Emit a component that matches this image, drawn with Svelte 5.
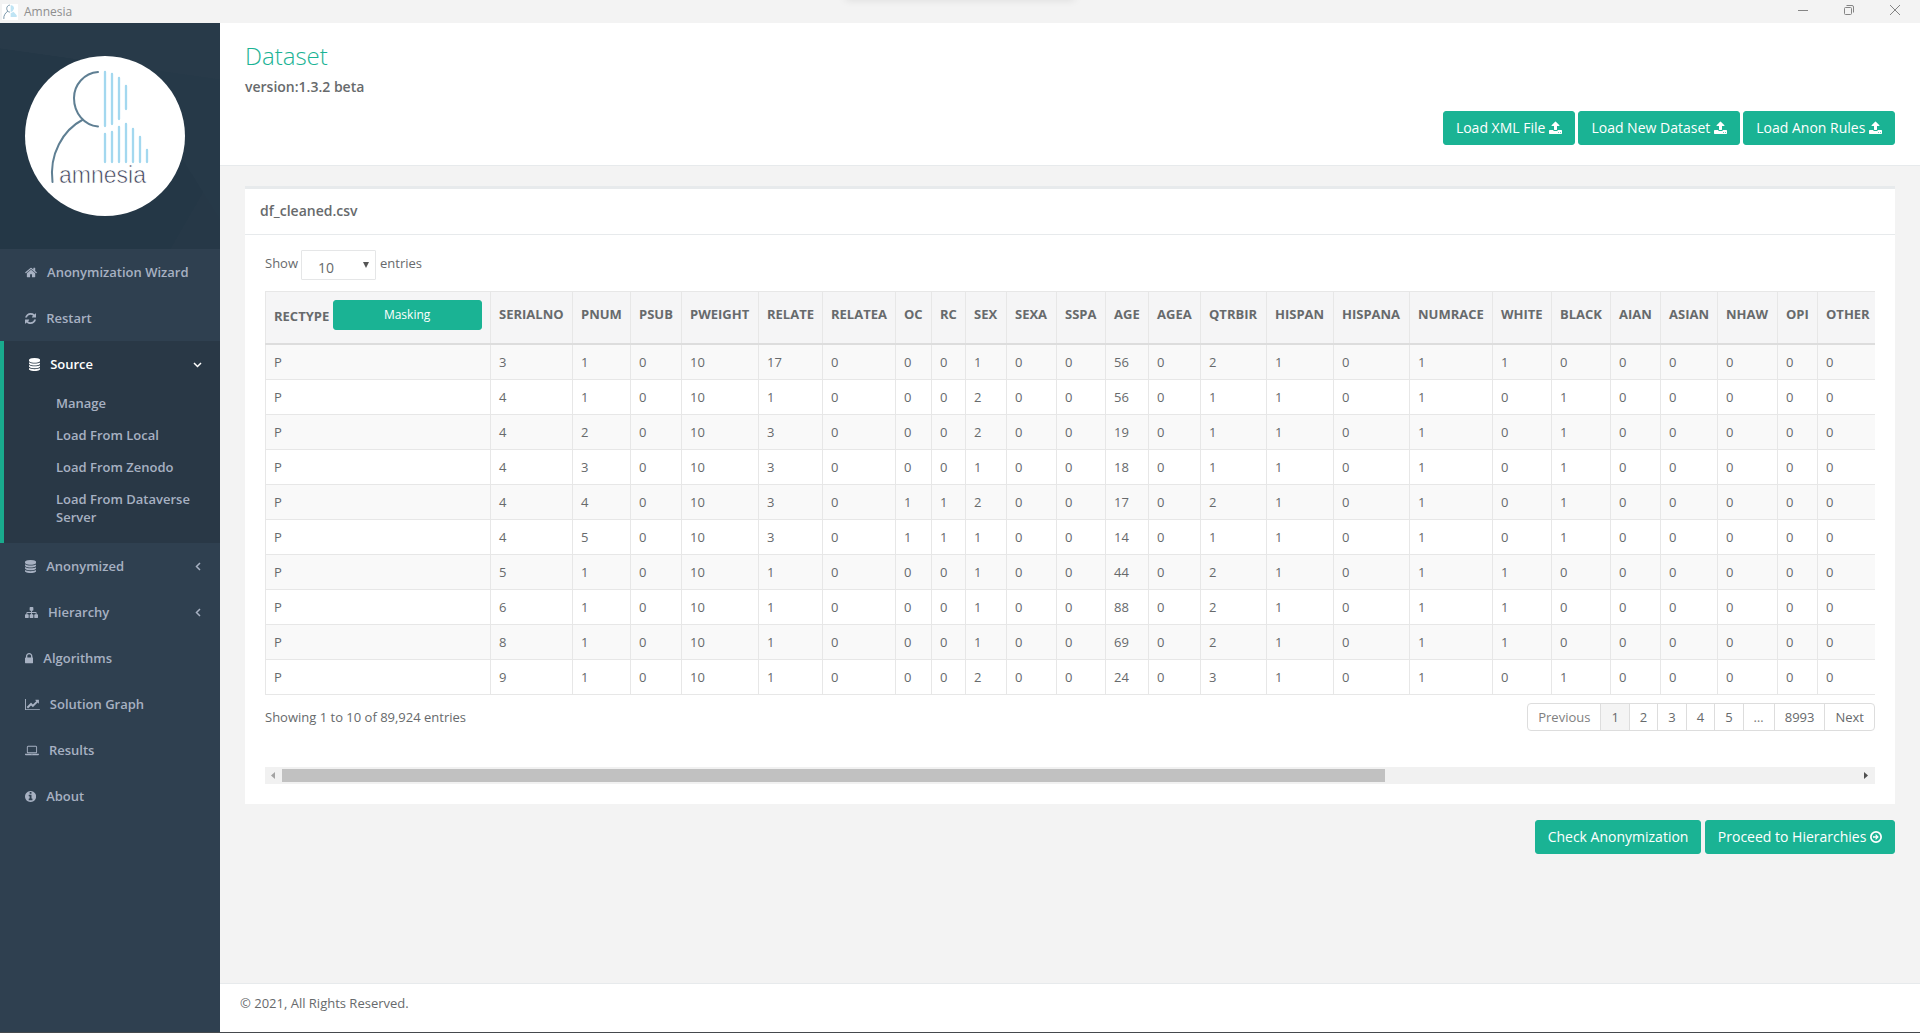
<script>
  const icons = {
    home: ['64 0 1664 1792', 'M1472 992v480q0 26-19 45t-45 19h-384v-384h-256v384h-384q-26 0-45-19t-19-45v-480q0-1 .5-3t.5-3l575-474 575 474q1 2 1 6zm223-69l-62 74q-8 9-21 11h-3q-13 0-21-7l-692-577-692 577q-12 8-24 7-13-2-21-11l-62-74q-8-10-7-23.5t11-21.5l719-599q32-26 76-26t76 26l244 204v-195q0-14 9-23t23-9h192q14 0 23 9t9 23v408l219 182q10 8 11 21.5t-7 23.5z'],
    refresh: ['128 0 1536 1792', 'M1639 1056q0 5-1 7-64 268-268 434.5t-478 166.5q-146 0-282.5-55t-243.5-157l-129 129q-19 19-45 19t-45-19-19-45v-448q0-26 19-45t45-19h448q26 0 45 19t19 45-19 45l-137 137q71 66 161 102t187 36q134 0 250-65t186-179q11-17 53-117 8-23 30-23h192q13 0 22.5 9.5t9.5 22.5zm25-800v448q0 26-19 45t-45 19h-448q-26 0-45-19t-19-45 19-45l138-138q-148-137-349-137-134 0-250 65t-186 179q-11 17-53 117-8 23-30 23h-199q-13 0-22.5-9.5t-9.5-22.5v-7q65-268 270-434.5t480-166.5q146 0 284 55.5t245 156.5l130-129q19-19 45-19t45 19 19 45z'],
    database: ['128 0 1536 1792', 'M896 768q237 0 443-43t325-127v170q0 69-103 128t-280 93.5-385 34.5-385-34.5-280-93.5-103-128v-170q119 84 325 127t443 43zm0 768q237 0 443-43t325-127v170q0 69-103 128t-280 93.5-385 34.5-385-34.5-280-93.5-103-128v-170q119 84 325 127t443 43zm0-384q237 0 443-43t325-127v170q0 69-103 128t-280 93.5-385 34.5-385-34.5-280-93.5-103-128v-170q119 84 325 127t443 43zm0-1152q208 0 385 34.5t280 93.5 103 128v128q0 69-103 128t-280 93.5-385 34.5-385-34.5-280-93.5-103-128v-128q0-69 103-128t280-93.5 385-34.5z'],
    sitemap: ['0 0 1792 1792', 'M1792 1248v320q0 40-28 68t-68 28h-320q-40 0-68-28t-28-68v-320q0-40 28-68t68-28h96v-192h-512v192h96q40 0 68 28t28 68v320q0 40-28 68t-68 28h-320q-40 0-68-28t-28-68v-320q0-40 28-68t68-28h96v-192h-512v192h96q40 0 68 28t28 68v320q0 40-28 68t-68 28h-320q-40 0-68-28t-28-68v-320q0-40 28-68t68-28h96v-192q0-52 38-90t90-38h512v-192h-96q-40 0-68-28t-28-68v-320q0-40 28-68t68-28h320q40 0 68 28t28 68v320q0 40-28 68t-68 28h-96v192h512q52 0 90 38t38 90v192h96q40 0 68 28t28 68z'],
    lock: ['320 0 1152 1792', 'M640 768h512v-192q0-106-75-181t-181-75-181 75-75 181v192zm832 96v576q0 40-28 68t-68 28h-960q-40 0-68-28t-28-68v-576q0-40 28-68t68-28h32v-192q0-184 132-316t316-132 316 132 132 316v192h32q40 0 68 28t28 68z'],
    chart: ['0 0 2048 1792', 'M2048 1536v128h-2048v-1536h128v1408h1920zm-128-1248v435q0 21-19.5 29.5t-35.5-7.5l-121-121-633 633q-10 10-23 10t-23-10l-233-233-416 416-192-192 585-585q10-10 23-10t23 10l233 233 464-464-121-121q-16-16-7.5-35.5t29.5-19.5h435q14 0 23 9t9 23z'],
    laptop: ['0 0 1920 1792', 'M416 1280q-66 0-113-47t-47-113v-704q0-66 47-113t113-47h1088q66 0 113 47t47 113v704q0 66-47 113t-113 47h-1088zm-32-864v704q0 13 9.5 22.5t22.5 9.5h1088q13 0 22.5-9.5t9.5-22.5v-704q0-13-9.5-22.5t-22.5-9.5h-1088q-13 0-22.5 9.5t-9.5 22.5zm1376 928h160v96q0 40-47 68t-113 28h-1600q-66 0-113-28t-47-68v-96h1760zm-720 96q16 0 16-16t-16-16h-160q-16 0-16 16t16 16h160z'],
    info: ['128 0 1536 1792', 'M1152 1376v-160q0-14-9-23t-23-9h-96v-512q0-14-9-23t-23-9h-320q-14 0-23 9t-9 23v160q0 14 9 23t23 9h96v320h-96q-14 0-23 9t-9 23v160q0 14 9 23t23 9h448q14 0 23-9t9-23zm-128-896v-160q0-14-9-23t-23-9h-192q-14 0-23 9t-9 23v160q0 14 9 23t23 9h192q14 0 23-9t9-23zm640 416q0 209-103 385.5t-279.5 279.5-385.5 103-385.5-103-279.5-279.5-103-385.5 103-385.5 279.5-279.5 385.5-103 385.5 103 279.5 279.5 103 385.5z'],
    upload: ['64 0 1664 1792', 'M1344 1472q0-26-19-45t-45-19-45 19-19 45 19 45 45 19 45-19 19-45zm256 0q0-26-19-45t-45-19-45 19-19 45 19 45 45 19 45-19 19-45zm128-224v320q0 40-28 68t-68 28h-1472q-40 0-68-28t-28-68v-320q0-40 28-68t68-28h427q21 56 70.5 92t110.5 36h256q61 0 110.5-36t70.5-92h427q40 0 68 28t28 68zm-325-648q-17 40-59 40h-256v448q0 26-19 45t-45 19h-256q-26 0-45-19t-19-45v-448h-256q-42 0-59-40-17-39 14-69l448-448q18-19 45-19t45 19l448 448q31 30 14 69z'],
    proceed: ['128 0 1536 1792', 'M896 128a768 768 0 1 0 0 1536a768 768 0 1 0 0-1536zM896 352a544 544 0 1 1 0 1088a544 544 0 1 1 0-1088zM896 544l-104 104 152 152h-432v192h432l-152 152 104 104 352-352z']
  };

  const menuTop = [
    { icon: 'home', label: 'Anonymization Wizard' },
    { icon: 'refresh', label: 'Restart' }
  ];
  const sources = ['Manage', 'Load From Local', 'Load From Zenodo', 'Load From Dataverse Server'];
  const menuBottom = [
    { icon: 'database', label: 'Anonymized', sub: true },
    { icon: 'sitemap', label: 'Hierarchy', sub: true },
    { icon: 'lock', label: 'Algorithms' },
    { icon: 'chart', label: 'Solution Graph' },
    { icon: 'laptop', label: 'Results' },
    { icon: 'info', label: 'About' }
  ];
  const loaders = ['Load XML File', 'Load New Dataset', 'Load Anon Rules'];

  const columns = [
    ['RECTYPE', 225], ['SERIALNO', 82], ['PNUM', 58], ['PSUB', 51], ['PWEIGHT', 77],
    ['RELATE', 64], ['RELATEA', 73], ['OC', 36], ['RC', 34], ['SEX', 41], ['SEXA', 50],
    ['SSPA', 49], ['AGE', 43], ['AGEA', 52], ['QTRBIR', 66], ['HISPAN', 67], ['HISPANA', 76],
    ['NUMRACE', 83], ['WHITE', 59], ['BLACK', 59], ['AIAN', 50], ['ASIAN', 57], ['NHAW', 60],
    ['OPI', 40], ['OTHER', 62]
  ];
  const tableWidth = columns.reduce((sum, c) => sum + c[1], 0);
  const rows = [
    'P 3 1 0 10 17 0 0 0 1 0 0 56 0 2 1 0 1 1 0 0 0 0 0 0',
    'P 4 1 0 10 1 0 0 0 2 0 0 56 0 1 1 0 1 0 1 0 0 0 0 0',
    'P 4 2 0 10 3 0 0 0 2 0 0 19 0 1 1 0 1 0 1 0 0 0 0 0',
    'P 4 3 0 10 3 0 0 0 1 0 0 18 0 1 1 0 1 0 1 0 0 0 0 0',
    'P 4 4 0 10 3 0 1 1 2 0 0 17 0 2 1 0 1 0 1 0 0 0 0 0',
    'P 4 5 0 10 3 0 1 1 1 0 0 14 0 1 1 0 1 0 1 0 0 0 0 0',
    'P 5 1 0 10 1 0 0 0 1 0 0 44 0 2 1 0 1 1 0 0 0 0 0 0',
    'P 6 1 0 10 1 0 0 0 1 0 0 88 0 2 1 0 1 1 0 0 0 0 0 0',
    'P 8 1 0 10 1 0 0 0 1 0 0 69 0 2 1 0 1 1 0 0 0 0 0 0',
    'P 9 1 0 10 1 0 0 0 2 0 0 24 0 3 1 0 1 0 1 0 0 0 0 0'
  ].map((r) => r.split(' '));
  const pages = ['Previous', '1', '2', '3', '4', '5', '…', '8993', 'Next'];

  const upperBars = [[105, 72, 126], [112, 74, 124], [119, 78, 119], [126, 86, 109]];
  const lowerBars = [[105, 134, 162], [112, 132, 162], [119, 127, 162], [126, 124, 162], [133, 129, 162], [140, 137, 162], [147, 150, 162]];
</script>

{#snippet icon(name)}
  <svg class="fa" viewBox={icons[name][0]} aria-hidden="true"><path fill-rule="evenodd" d={icons[name][1]} /></svg>
{/snippet}

{#snippet person()}
  <g fill="none" stroke-linecap="round" stroke-width="2.3">
    <path stroke="#5f7f93" stroke-width="2" d="M98 72C84 73 74 85 74 98C74 113 84 125 98 126.500M83 119.500C63 130 49 154 52.500 182" />
    {#each [...upperBars, ...lowerBars] as [x, a, b]}
      <path stroke="#a3d8ef" d="M{x} {a}V{b}" />
    {/each}
  </g>
{/snippet}

<div class="window">
  <header class="titlebar">
    <svg class="appicon" viewBox="38 64 122 122" aria-hidden="true">
      <g fill="none" stroke="#6f8fa3" stroke-width="7"><path d="M98 72C84 73 74 85 74 98C74 113 84 125 98 126M83 119C63 130 49 154 52 178" /></g>
      <path fill="#bfe4f4" d="M104 72Q128 76 130 98Q126 118 104 126zM104 134L126 124L150 150V164H104z" />
    </svg>
    <span class="apptitle">Amnesia</span>
    <div class="snapbar"></div>
    <div class="controls">
      <button aria-label="Minimize"><svg viewBox="0 0 12 12"><path d="M1 6.500H11" /></svg></button>
      <button aria-label="Restore"><svg viewBox="0 0 12 12"><rect x="1.500" y="3.500" width="7" height="7" rx="1" /><path d="M3.500 1.500H9Q10.500 1.500 10.500 3V8.500" /></svg></button>
      <button aria-label="Close"><svg viewBox="0 0 12 12"><path d="M1 1L11 11M11 1L1 11" /></svg></button>
    </div>
  </header>

  <div class="app">
    <nav class="sidebar">
      <div class="brand">
        <svg class="logo" viewBox="25 56 160 160" role="img" aria-label="amnesia">
          <circle cx="105" cy="136" r="80" fill="#fff" />
          {@render person()}
          <text x="59" y="183" class="word">amnesia</text>
        </svg>
      </div>
      <ul class="menu">
        {#each menuTop as m}
          <li><a href="#{m.icon}">{@render icon(m.icon)}{m.label}</a></li>
        {/each}
        <li class="active">
          <a href="#source">{@render icon('database')}Source
            <svg class="angle" viewBox="0 0 9 9"><path d="M1 3L4.500 6.500L8 3" /></svg></a>
          <ul class="sub">
            {#each sources as s}
              <li><a href="#source">{s}</a></li>
            {/each}
          </ul>
        </li>
        {#each menuBottom as m}
          <li>
            <a href="#{m.icon}">{@render icon(m.icon)}{m.label}
              {#if m.sub}<svg class="angle" viewBox="0 0 9 9"><path d="M7 1L3.500 4.500L7 8" /></svg>{/if}</a>
          </li>
        {/each}
      </ul>
    </nav>

    <div class="page">
      <section class="heading">
        <h2>Dataset</h2>
        <p class="version">version:1.3.2 beta</p>
        <div class="actions">
          {#each loaders as l}
            <button class="btn">{l} {@render icon('upload')}</button>{' '}
          {/each}
        </div>
      </section>

      <main>
        <section class="panel">
          <h5>df_cleaned.csv</h5>
          <div class="content">
            <div class="length">
              <label for="len">Show</label>
              <span class="pick">
                <select id="len"><option>10</option><option>25</option><option>50</option></select>
              </span>
              <span>entries</span>
            </div>

            <div class="scroller">
              <table style="width: {tableWidth}px">
                <colgroup>
                  {#each columns as c}<col style="width: {c[1]}px" />{/each}
                </colgroup>
                <thead>
                  <tr>
                    {#each columns as c, i}
                      {#if i === 0}
                        <th class="first">{c[0]} <button class="btn mask">Masking</button></th>
                      {:else}
                        <th>{c[0]}</th>
                      {/if}
                    {/each}
                  </tr>
                </thead>
                <tbody>
                  {#each rows as row}
                    <tr>{#each row as cell}<td>{cell}</td>{/each}</tr>
                  {/each}
                </tbody>
              </table>
            </div>

            <div class="tablefoot">
              <span>Showing 1 to 10 of 89,924 entries</span>
              <div class="pager">
                {#each pages as p}
                  <a href="#page" class:current={p === '1'} class:off={p === 'Previous' || p === '…'}>{p}</a>
                {/each}
              </div>
            </div>

            <div class="hbar">
              <button aria-label="Scroll left"><svg class="dim" viewBox="0 0 17 17"><path d="M10 5V12L6 8.500z" /></svg></button>
              <div class="track"><div class="thumb"></div></div>
              <button aria-label="Scroll right"><svg viewBox="0 0 17 17"><path d="M6 5V12L10 8.500z" /></svg></button>
            </div>
          </div>
        </section>
        <div class="actions">
          <button class="btn">Check Anonymization</button>
          <button class="btn">Proceed to Hierarchies {@render icon('proceed')}</button>
        </div>
      </main>

      <footer>© 2021, All Rights Reserved.</footer>
    </div>
  </div>
</div>

<style>
  :global(body) {
    margin: 0;
    background: #f3f3f3;
  }
  .window {
    box-sizing: border-box;
    min-height: 100vh;
    display: flex;
    flex-direction: column;
    border-bottom: 1px solid #45494d;
    font-family: 'Open Sans', 'Noto Sans', sans-serif;
    font-size: 13px;
    line-height: 18px;
    color: #676a6c;
  }
  button, select {
    font-family: inherit;
    margin: 0;
  }
  a {
    color: inherit;
    text-decoration: none;
  }
  ul {
    list-style: none;
    margin: 0;
    padding: 0;
  }

  .titlebar {
    position: relative;
    display: flex;
    align-items: center;
    height: 23px;
    background: #f3f3f3;
    padding: 0 2px;
    overflow: hidden;
  }
  .appicon {
    width: 16px;
    height: 16px;
    background: #fff;
  }
  .apptitle {
    margin-left: 6px;
    font-size: 12px;
    color: #8e8e8e;
  }
  .snapbar {
    position: absolute;
    top: -6px;
    left: 44%;
    width: 12%;
    height: 5px;
    border-radius: 4px;
    box-shadow: 0 0 8px rgba(0, 0, 0, 0.15);
  }
  .controls {
    margin-left: auto;
    align-self: flex-start;
    display: flex;
  }
  .controls button {
    width: 46px;
    height: 20px;
    padding: 0;
    border: 0;
    background: none;
    display: grid;
    place-items: center;
  }
  .controls svg {
    width: 12px;
    height: 12px;
    fill: none;
    stroke: #858585;
  }

  .app {
    flex: 1;
    display: flex;
  }
  .sidebar {
    flex: none;
    width: 220px;
    background: #2f4050;
    color: #a7b1c2;
    font-weight: 600;
  }
  .brand {
    padding: 33px 25px;
    background:
      linear-gradient(8deg, transparent 78%, #283a49 78.2%),
      linear-gradient(58deg, transparent 66%, #263948 66.2%),
      linear-gradient(-60deg, #263847 0 14%, transparent 14.2%),
      #243746;
  }
  .logo {
    display: block;
    width: 160px;
    height: 160px;
  }
  .word {
    font-family: 'Liberation Sans', sans-serif;
    font-weight: 400;
    font-size: 23px;
    fill: #3d4259;
    stroke: #fff;
    stroke-width: 0.6;
  }
  .fa {
    height: 1em;
    fill: currentColor;
    vertical-align: -2px;
  }
  .menu > li > a {
    display: flex;
    align-items: center;
    padding: 14px 18px 14px 25px;
  }
  .menu .fa {
    margin-right: 10px;
  }
  .active {
    background: #293846;
    border-left: 4px solid #19aa8d;
  }
  .active > a {
    color: #fff;
  }
  .angle {
    margin-left: auto;
    width: 9px;
    height: 9px;
    fill: none;
    stroke: currentColor;
    stroke-width: 1.5;
  }
  .sub {
    padding-bottom: 10px;
  }
  .sub a {
    display: block;
    padding: 7px 10px 7px 52px;
  }

  .page {
    flex: 1;
    min-width: 0;
    display: flex;
    flex-direction: column;
  }
  .heading {
    background: #fff;
    border-bottom: 1px solid #e7eaec;
    padding: 20px 25px;
  }
  h2 {
    margin: 0 0 8px;
    font-size: 24px;
    line-height: 26px;
    font-weight: 300;
    color: #1ab394;
  }
  .version {
    margin: 0 0 14px;
    font-size: 14px;
    line-height: 20px;
    font-weight: 600;
  }
  .actions {
    text-align: right;
    line-height: 0;
  }
  .btn {
    box-sizing: border-box;
    height: 34px;
    padding: 6px 12px;
    border: 1px solid #1ab394;
    border-radius: 3px;
    background: #1ab394;
    color: #fff;
    font-size: 14px;
    line-height: 20px;
    vertical-align: middle;
  }

  main {
    flex: 1;
    padding: 20px 25px;
  }
  .panel {
    background: #fff;
    border-top: 3px solid #e7eaec;
    margin-bottom: 16px;
  }
  h5 {
    margin: 0;
    padding: 12px 15px 13px;
    border-bottom: 1px solid #e7eaec;
    font-size: 14px;
    line-height: 20px;
    font-weight: 600;
  }
  .content {
    padding: 15px 20px 20px;
  }
  .length {
    display: flex;
    gap: 3px;
    line-height: 26px;
    margin-bottom: 11px;
  }
  .pick {
    position: relative;
    margin-right: 1px;
  }
  .pick::after {
    content: '';
    position: absolute;
    right: 7px;
    top: 12px;
    border: 3px solid transparent;
    border-top: 6px solid #555;
    border-bottom: 0;
    pointer-events: none;
  }
  select {
    display: block;
    box-sizing: border-box;
    width: 75px;
    height: 30px;
    padding: 4px 16px 0;
    appearance: none;
    border: 1px solid #e5e6e7;
    border-radius: 1px;
    background: #fff;
    color: inherit;
    font-size: 14px;
  }

  .scroller {
    overflow: hidden;
  }
  table {
    table-layout: fixed;
    border-collapse: collapse;
  }
  th, td {
    padding: 8px;
    border: 1px solid #e7e7e7;
    text-align: left;
    white-space: nowrap;
  }
  th {
    padding-bottom: 15px;
    background: #f5f5f6;
    font-weight: 700;
    border-bottom: 2px solid #ddd;
  }
  .first {
    padding-bottom: 8px;
  }
  tbody tr:nth-child(odd) {
    background: #f9f9f9;
  }
  .mask {
    width: 149px;
    height: 30px;
    padding: 5px 10px;
    margin-bottom: 5px;
    font-size: 12px;
    line-height: 18px;
  }

  .tablefoot {
    display: flex;
    justify-content: space-between;
    align-items: center;
    margin: 8px 0 36px;
  }
  .pager {
    display: flex;
  }
  .pager a {
    padding: 4px 10px;
    border: 1px solid #ddd;
    margin-left: -1px;
  }
  .pager a:first-child {
    border-radius: 4px 0 0 4px;
  }
  .pager a:last-child {
    border-radius: 0 4px 4px 0;
  }
  .pager .current {
    background: #f4f4f4;
  }
  .pager .off {
    color: #808080;
  }

  .hbar {
    display: flex;
    background: #f1f1f1;
    height: 17px;
  }
  .hbar button {
    width: 17px;
    padding: 0;
    border: 0;
    background: none;
  }
  .hbar svg {
    display: block;
    fill: #505050;
  }
  .hbar .dim {
    fill: #a3a3a3;
  }
  .track {
    flex: 1;
    padding: 2px 0;
  }
  .thumb {
    width: 70%;
    height: 13px;
    background: #c1c1c1;
  }

  footer {
    background: #fff;
    border-top: 1px solid #e7eaec;
    padding: 10px 20px 20px;
  }
</style>
